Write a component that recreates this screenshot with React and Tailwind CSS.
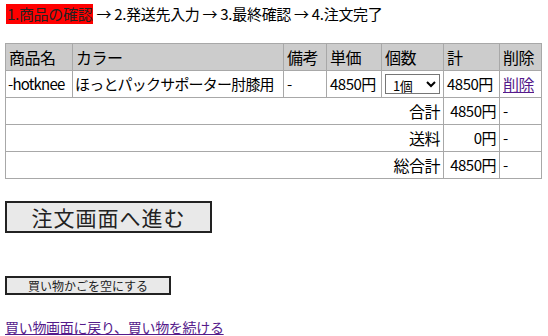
import { useState } from 'react';

const font = { fontFamily: '"Noto Sans CJK JP", "Liberation Sans", sans-serif' };

const steps = ['2.発送先入力', '3.最終確認', '4.注文完了'];

const Cart = () => {
  const [qty, setQty] = useState('1');

  return (
    <div className="w-[548px] h-[336px] bg-white text-black overflow-hidden" style={font}>
      {/* ステップ表示 */}
      <div className="flex items-center h-[20px] mt-[4px] ml-[6px] text-[15px] leading-[20px] tracking-[-0.3px]">
        <span className="bg-[#ff0000] text-[#222] px-[1px]">1.商品の確認</span>
        {steps.map((s) => (
          <span key={s} className="ml-[3px]">→ {s}</span>
        ))}
      </div>

      {/* カート表 */}
      <table className="mt-[19px] ml-[5px] w-[536px] table-fixed border-collapse border border-[#b4b4b4] text-[15px] leading-[18px] tracking-[-0.5px]">
        <colgroup>
          <col className="w-[67px]" />
          <col className="w-[211px]" />
          <col className="w-[43px]" />
          <col className="w-[55px]" />
          <col className="w-[62px]" />
          <col className="w-[56px]" />
          <col className="w-[42px]" />
        </colgroup>
        <thead>
          <tr className="h-[27px] bg-[#cccccc]">
            {['商品名', 'カラー', '備考', '単価', '個数', '計', '削除'].map((h) => (
              <th key={h} className="border border-[#a8a8a8] px-[3px] font-normal text-left text-[16px]">{h}</th>
            ))}
          </tr>
        </thead>
        <tbody>
          <tr className="h-[27px]">
            <td className="border border-[#a8a8a8] px-[2px] whitespace-nowrap tracking-[-0.8px]">-hotknee</td>
            <td className="border border-[#a8a8a8] px-[2px] whitespace-nowrap tracking-[-0.8px]">ほっとパックサポーター肘膝用</td>
            <td className="border border-[#a8a8a8] px-[3px]">-</td>
            <td className="border border-[#a8a8a8] px-[3px] whitespace-nowrap">4850円</td>
            <td className="border border-[#a8a8a8] px-[3px]">
              <select
                value={qty}
                onChange={(e) => setQty(e.target.value)}
                className="w-[55px] h-[20px] border border-[#767676] bg-white text-[13px] leading-[16px] pl-[3px]"
                style={font}
              >
                <option value="1">1個</option>
                <option value="2">2個</option>
                <option value="3">3個</option>
              </select>
            </td>
            <td className="border border-[#a8a8a8] px-[3px] whitespace-nowrap">4850円</td>
            <td className="border border-[#a8a8a8] px-[3px] text-[16px]">
              <a href="#" className="text-[#551a8b] underline">削除</a>
            </td>
          </tr>
          {[
            ['合計', '4850円'],
            ['送料', '0円'],
            ['総合計', '4850円'],
          ].map(([label, val]) => (
            <tr key={label} className="h-[27px]">
              <td colSpan={5} className="border border-[#a8a8a8] px-[3px] text-right text-[16px]">{label}</td>
              <td className="border border-[#a8a8a8] px-[3px] text-right whitespace-nowrap">{val}</td>
              <td className="border border-[#a8a8a8] px-[3px]">-</td>
            </tr>
          ))}
        </tbody>
      </table>

      {/* ボタン */}
      <button
        className="block mt-[22px] ml-[5px] w-[207px] h-[32px] bg-[#e9e9e9] border-2 border-[#222] text-[21px] leading-[28px] text-[#222] tracking-[1px]"
        style={font}
      >
        注文画面へ進む
      </button>
      <button
        className="block mt-[43px] ml-[5px] w-[166px] h-[19px] bg-[#e9e9e9] border-2 border-[#222] text-[12px] leading-[15px] text-[#222]"
        style={font}
      >
        買い物かごを空にする
      </button>
      <div className="mt-[22px] ml-[5px] h-[18px] leading-[18px]">
        <a href="#" className="text-[14px] text-[#551a8b] underline tracking-[-0.3px]">
          買い物画面に戻り、買い物を続ける
        </a>
      </div>
    </div>
  );
};

export default function App() {
  return <Cart />;
}
